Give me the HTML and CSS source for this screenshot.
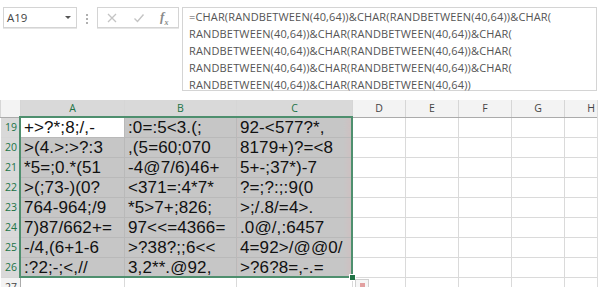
FILE: index.html
```html
<!DOCTYPE html>
<html>
  <head>
    <link rel="stylesheet" href="styles.css">
  </head>
  <body>
    <div class="formula-area">
      <div class="name-box">
        <span class="name-text">A19</span>
        <span class="name-arrow"></span>
      </div>
      <div class="grip"><i></i><i></i><i></i></div>
      <div class="fx-box">
        <svg width="12" height="12" viewBox="0 0 12 12"><path d="M2 2 L10 10 M10 2 L2 10" stroke="#c4c4c4" stroke-width="1.3" fill="none"/></svg>
        <svg width="12" height="12" viewBox="0 0 12 12"><path d="M1.5 6.5 L4.5 9.5 L10.5 2.5" stroke="#c4c4c4" stroke-width="1.4" fill="none"/></svg>
        <span class="fx">f<sub>x</sub></span>
      </div>
      <div class="formula-box">=CHAR(RANDBETWEEN(40,64))&amp;CHAR(RANDBETWEEN(40,64))&amp;CHAR(
RANDBETWEEN(40,64))&amp;CHAR(RANDBETWEEN(40,64))&amp;CHAR(
RANDBETWEEN(40,64))&amp;CHAR(RANDBETWEEN(40,64))&amp;CHAR(
RANDBETWEEN(40,64))&amp;CHAR(RANDBETWEEN(40,64))&amp;CHAR(
RANDBETWEEN(40,64))&amp;CHAR(RANDBETWEEN(40,64))</div>
    </div>

    <div class="sheet">
      <table>
        <colgroup>
          <col class="c-row"><col class="c-a"><col class="c-b"><col class="c-c">
          <col class="c-n"><col class="c-n"><col class="c-n"><col class="c-n"><col class="c-n">
        </colgroup>
        <thead>
          <tr>
            <th class="corner"></th>
            <th class="sel">A</th><th class="sel">B</th><th class="sel">C</th>
            <th>D</th><th>E</th><th>F</th><th>G</th><th>H</th>
          </tr>
        </thead>
        <tbody id="rows"></tbody>
      </table>
      <div class="selection"></div>
      <div class="fill-handle"></div>
      <div class="paste-btn"><span></span></div>
      <div class="scrollbar"></div>
    </div>

    <script>
      const data = [
        ["+>?*;8;/,-", ":0=:5<3.(;", "92-<577?*,"],
        [">(4.>:>?:3", ",(5=60;070", "8179+)?=<8"],
        ["*5=;0.*(51", "-4@7/6)46+", "5+-;37*)-7"],
        [">(;73-)(0?", "<371=:4*7*", "?=;?:;:9(0"],
        ["764-964;/9", "*5>7+;826;", ">;/.8/=4>."],
        ["7)87/662+=", "97<<=4366=", ".0@/,:6457"],
        ["-/4,(6+1-6", ">?38?;;6<<", "4=92>/@@0/"],
        [":?2;-;<,//", "3,2**.@92,", ">?6?8=,-.="]
      ];
      const body = document.getElementById("rows");
      data.forEach((row, i) => {
        const tr = document.createElement("tr");
        let cells = `<th class="sel">${19 + i}</th>`;
        row.forEach((val, j) => {
          let cls = i === 0 && j === 0 ? "val active" : "val";
          if (j === 2) cls += " edge";
          const text = val.replace(/&/g, "&amp;").replace(/</g, "&lt;").replace(/>/g, "&gt;");
          cells += `<td class="${cls}">${text}</td>`;
        });
        cells += "<td></td><td></td><td></td><td></td><td></td>";
        tr.innerHTML = cells;
        body.appendChild(tr);
      });
      const last = document.createElement("tr");
      last.innerHTML = '<th>27</th><td></td><td></td><td></td><td></td><td></td><td></td><td></td><td></td>';
      body.appendChild(last);
    </script>
  </body>
</html>
```

FILE: styles.css
```css
body {
  margin: 0;
  background: #ffffff;
  width: 600px;
  height: 287px;
  overflow: hidden;
  font-family: "Liberation Sans", Arial, sans-serif;
}

.formula-area {
  display: flex;
  align-items: flex-start;
  height: 100px;
  padding: 7px 3px 0 3px;
  box-sizing: border-box;
}

.name-box {
  width: 74px;
  height: 21px;
  box-sizing: border-box;
  border: 1px solid #d4d4d4;
  box-shadow: 0 1px 0 #e6e6e6;
  display: flex;
  align-items: center;
  justify-content: space-between;
  padding: 0 5px 0 3px;
  font-family: "Open Sans", sans-serif;
  font-size: 11.5px;
  color: #444444;
}

.name-arrow {
  width: 0;
  height: 0;
  border-left: 3px solid transparent;
  border-right: 3px solid transparent;
  border-top: 3px solid #555555;
}

.grip {
  width: 20px;
  display: flex;
  flex-direction: column;
  align-items: center;
  gap: 2px;
  padding-top: 7px;
}

.grip i {
  width: 2px;
  height: 2px;
  background: #b0b0b0;
}

.fx-box {
  width: 82px;
  height: 21px;
  box-sizing: border-box;
  border: 1px solid #d4d4d4;
  box-shadow: 0 1px 0 #e6e6e6;
  display: flex;
  align-items: center;
  justify-content: space-around;
  padding: 0 2px 0 0;
}

.fx {
  font-family: "Liberation Serif", serif;
  font-style: italic;
  font-weight: bold;
  font-size: 13px;
  color: #8a8a8a;
}

.fx sub {
  font-size: 8px;
}

.formula-box {
  margin-left: 3px;
  flex: 1;
  height: 84px;
  box-sizing: border-box;
  border: 1px solid #d4d4d4;
  padding: 0 0 0 6px;
  white-space: pre;
  font-family: "Open Sans", sans-serif;
  font-size: 11px;
  letter-spacing: 0.15px;
  line-height: 17px;
  color: #555555;
}

.sheet {
  position: relative;
}

table {
  border-collapse: collapse;
  table-layout: fixed;
  width: 617px;
}

.c-row { width: 20px; }
.c-a { width: 104px; }
.c-b { width: 112px; }
.c-c { width: 116px; }
.c-n { width: 53px; }

th {
  background: #f3f3f3;
  font-family: "Open Sans", sans-serif;
  font-weight: normal;
  font-size: 10.5px;
  color: #444444;
  border: 1px solid #d6d6d6;
  padding: 0;
}

thead th {
  height: 16px;
  line-height: 16px;
  text-align: center;
  border-top: none;
  border-bottom: 1px solid #ababab;
}

thead th.sel {
  background: #d9d9d9;
  color: #217346;
  border-bottom: 2px solid #217346;
}

tbody th {
  height: 19px;
  line-height: 19px;
  text-align: right;
  padding-right: 3px;
  border-left: none;
  border-right: 1px solid #ababab;
}

tbody th.sel {
  background: #d9d9d9;
  color: #217346;
}

td {
  height: 19px;
  line-height: 19px;
  border: 1px solid #dadada;
  padding: 0 0 0 3px;
  white-space: nowrap;
  overflow: hidden;
}

td.val {
  background: #c6c6c6;
  border-color: #b9b9b9;
  font-size: 17px;
  line-height: 19px;
  letter-spacing: 0.1px;
  color: #111111;
}

td.val.edge {
  background: linear-gradient(to right, #c6c6c6 92%, #cfbfc0 100%);
}

td.val.active {
  background: #ffffff;
}

.selection {
  position: absolute;
  left: 19px;
  top: 16px;
  width: 330px;
  height: 158px;
  border: 2px solid #4e8f6e;
  pointer-events: none;
}

.fill-handle {
  position: absolute;
  left: 349px;
  top: 174px;
  width: 5px;
  height: 5px;
  background: #217346;
  border: 1px solid #ffffff;
}

.paste-btn {
  position: absolute;
  left: 355px;
  top: 179px;
  width: 12px;
  height: 10px;
  border: 1px solid #d0d0d0;
  background: #f6f6f6;
}

.paste-btn span {
  display: block;
  margin: 3px 0 0 4px;
  width: 5px;
  height: 4px;
  background: #e2a0a0;
}

.scrollbar {
  position: absolute;
  left: 597px;
  top: 0;
  width: 3px;
  height: 187px;
  background: #ffffff;
  border-left: 1px solid #dcdcdc;
}
```
